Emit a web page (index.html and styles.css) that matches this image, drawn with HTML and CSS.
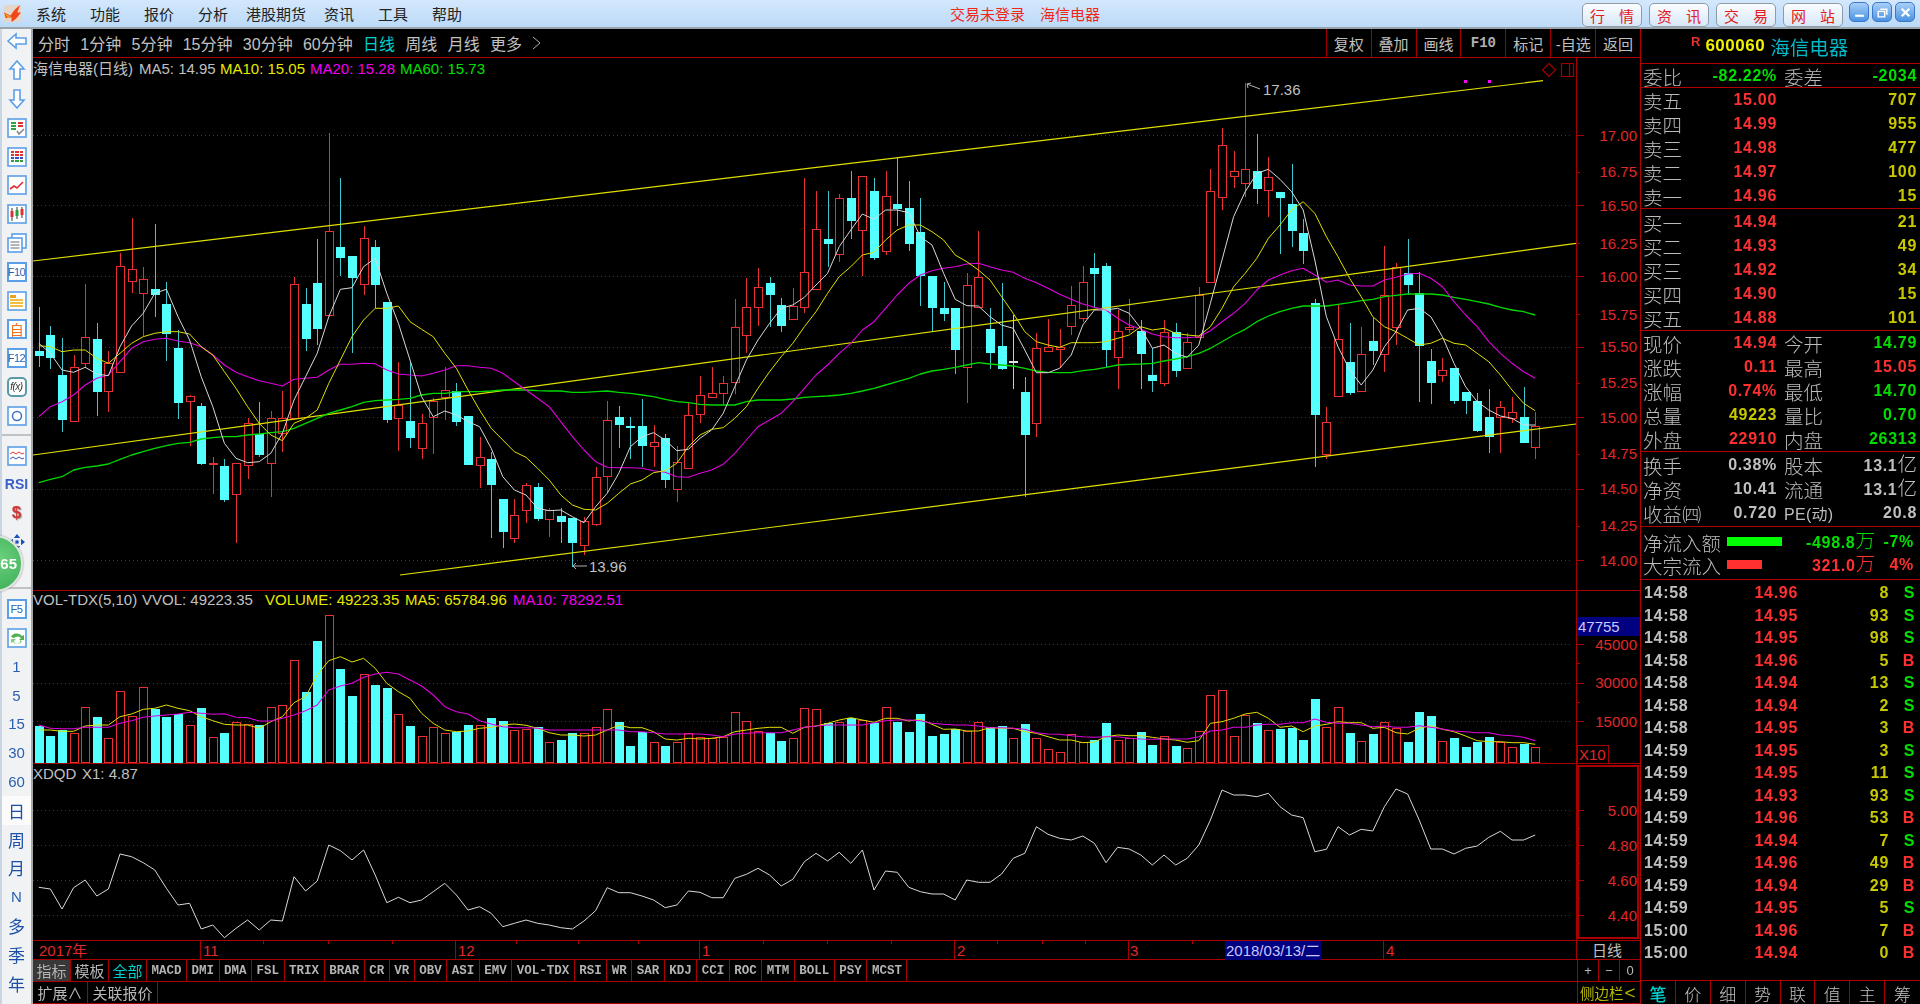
FILE: index.html
```html
<!DOCTYPE html>
<html lang="zh-CN">
<head>
<meta charset="utf-8">
<title>海信电器 600060</title>
<link rel="stylesheet" href="styles.css">
</head>
<body>
<div class="app">
  <header class="titlebar">
    <svg class="logo" viewBox="0 0 20 20"><rect x="1" y="1" width="18" height="18" rx="3" fill="#e4d6ca"/><path d="M1 9 L8 12 C11 7 14 4 18 1 L15 9 L19 9 C16 13 13 17 9 19 L9 14 L3 15 Z" fill="#f04818"/><path d="M2 10 L8 13 L5 15 Z" fill="#f8a020"/></svg>
    <nav class="menu"><span>系统</span><span>功能</span><span>报价</span><span>分析</span><span class="nar">港股期货</span><span>资讯</span><span>工具</span><span>帮助</span></nav>
    <div class="status"><span>交易未登录</span><span>海信电器</span></div>
    <div class="links"><a class="link"><i>行</i><i>情</i></a><a class="link"><i>资</i><i>讯</i></a><a class="link"><i>交</i><i>易</i></a><a class="link"><i>网</i><i>站</i></a></div>
    <div class="winbtns">
      <b class="winbtn"><svg viewBox="0 0 12 12"><rect x="2" y="8" width="8" height="2" fill="#fff"/></svg></b>
      <b class="winbtn"><svg viewBox="0 0 12 12"><path d="M4 3h6v5M2 5h6v5H2z" fill="none" stroke="#fff" stroke-width="1.3"/></svg></b>
      <b class="winbtn"><svg viewBox="0 0 12 12"><path d="M2.5 2.5l7 7M9.500 2.500l-7 7" stroke="#fff" stroke-width="2"/></svg></b>
    </div>
  </header>
  <div class="main">
    <aside class="side">
      <div class="cell first"><svg class="ic" viewBox="0 0 20 20"><path class="arr" d="M1 10 L9 3 V7 H19 V13 H9 V17 Z"/></svg></div>
      <div class="cell"><svg class="ic" viewBox="0 0 20 20"><path class="arr" d="M10 1 L17 9 H13 V19 H7 V9 H3 Z"/></svg></div>
      <div class="cell"><svg class="ic" viewBox="0 0 20 20"><path class="arr" d="M10 19 L17 11 H13 V1 H7 V11 H3 Z"/></svg></div>
      <div class="cell"><svg class="ic" viewBox="0 0 20 20"><rect class="box" x="1" y="1" width="18" height="18"/><path d="M4 5h5M4 8h5M4 11h5" stroke="#30a040" stroke-width="2"/><path d="M11 5h5M11 8h5" stroke="#e03030" stroke-width="2"/><path d="M10 13l2 3 5-5" fill="none" stroke="#888" stroke-width="1.600"/></svg></div>
      <div class="cell"><svg class="ic" viewBox="0 0 20 20"><rect class="box" x="1" y="1" width="18" height="18"/><path d="M4 5h12M4 8h12" stroke="#e03030" stroke-width="2"/><path d="M4 11h12" stroke="#3050c0" stroke-width="2"/><path d="M4 14h12" stroke="#30a040" stroke-width="2"/><path d="M7.500 4v12M12.500 4v12" stroke="#fff"/></svg></div>
      <div class="cell"><svg class="ic" viewBox="0 0 20 20"><rect class="box" x="1" y="1" width="18" height="18"/><path d="M3 14l4-3 3 2 6-6" fill="none" stroke="#e03030" stroke-width="1.600"/></svg></div>
      <div class="cell"><svg class="ic" viewBox="0 0 20 20"><rect class="box" x="1" y="1" width="18" height="18"/><path d="M5 4v13M10 3v12M15 3v11" stroke="#333"/><rect x="3.500" y="7" width="3" height="6" fill="#e03030"/><rect x="8.500" y="6" width="3" height="6" fill="#20a040"/><rect x="13.500" y="5" width="3" height="6" fill="#e03030"/></svg></div>
      <div class="cell"><svg class="ic" viewBox="0 0 20 20"><rect class="box" x="5" y="1" width="14" height="14"/><rect class="box" x="1" y="5" width="14" height="14"/><path d="M3.500 9h9M3.500 12h9M3.500 15h9" stroke="#667"/></svg></div>
      <div class="cell"><span class="fbox">F10</span></div>
      <div class="cell"><svg class="ic" viewBox="0 0 20 20"><rect class="box" x="1" y="1" width="18" height="18"/><rect x="3" y="4" width="6" height="3" fill="#e8a020"/><path d="M3 9h13M3 12h13M3 15h13" stroke="#f0c040" stroke-width="2"/></svg></div>
      <div class="cell"><span class="fbox orange">自</span></div>
      <div class="cell"><span class="fbox">F12</span></div>
      <div class="cell"><span class="fbox round">f(x)</span></div>
      <div class="cell"><svg class="ic" viewBox="0 0 20 20"><rect class="box" x="1" y="1" width="18" height="18"/><circle cx="10" cy="10" r="4.500" fill="none" stroke="#3c70c8" stroke-width="1.500"/></svg></div>
      <div class="sep top"></div>
      <div class="cell"><svg class="ic" viewBox="0 0 20 20"><rect class="box" x="1" y="1" width="18" height="18"/><path d="M3 8l3-2 3 2 3-2 3 2 2-1" fill="none" stroke="#e03030"/><path d="M3 13l3-2 3 2 3-2 3 2 2-1" fill="none" stroke="#3050c0"/></svg></div>
      <div class="cell"><span class="rsi">RSI</span></div>
      <div class="cell"><span class="dollar">$</span></div>
      <div class="cell"><svg class="ic wide" viewBox="0 0 20 20"><path d="M10 0l4 5h-8zM10 20l-4-5h8zM0 10l5-4v8zM20 10l-5 4v-8z" fill="#1c50c0"/><rect x="8" y="8" width="4" height="4" fill="#1c50c0"/></svg></div>
      <div class="sep mid"></div>
      <div class="cell"><span class="fbox">F5</span></div>
      <div class="cell"><svg class="ic" viewBox="0 0 20 20"><rect class="box" x="1" y="1" width="18" height="18"/><path d="M4 9a6 5 0 0 1 11-1l2-1v5h-5l2-2a4 3 0 0 0-7 0z" fill="#50b050"/><path d="M15 13a5 4 0 0 1-9 1l-2 1v-4h5l-2 2a3 3 0 0 0 6-1z" fill="#80d080"/></svg></div>
      <div class="cell nm">1</div><div class="cell nm">5</div><div class="cell nm">15</div><div class="cell nm">30</div><div class="cell nm">60</div>
      <div class="sep low"></div>
      <div class="cell nm cj active">日</div><div class="cell nm cj">周</div><div class="cell nm cj">月</div><div class="cell nm">N</div><div class="cell nm cj">多</div><div class="cell nm cj">季</div><div class="cell nm cj">年</div>
    </aside>
    <div class="bubble">65</div>
    <section class="center">
      <div class="toolbar">
        <div class="periods"><span>分时</span><span>1分钟</span><span>5分钟</span><span>15分钟</span><span>30分钟</span><span>60分钟</span><span class="on">日线</span><span>周线</span><span>月线</span><span>更多</span><svg class="chev" viewBox="0 0 9 14"><path d="M1 1l7 6-7 6" fill="none" stroke="#b0b0b0"/></svg></div>
        <div class="tools"><span>复权</span><span>叠加</span><span>画线</span><span class="f10">F10</span><span>标记</span><span>-自选</span><span>返回</span></div>
      </div>
      <svg class="chart" width="1607" height="902" viewBox="33 58 1607 902">
        <g id="grid"></g>
        <g id="plot"></g>
        <path class="channel" d="M33 261 L1543 80.700 M33 455 L1576 243.300 M400 575 L1576 424"/>
        <g id="lines"></g>
        <rect class="dot" x="1464" y="80" width="3" height="3"/><rect class="dot" x="1488" y="80" width="3" height="3"/>
        <path class="mark" d="M1549 63.500 L1555.500 70 L1549 76.500 L1542.500 70 Z M1561.500 63.500 H1573.500 V76.500 H1561.500 Z M1569.500 63.500 V76.500"/>
        <path class="pin" d="M1247 84 L1260 89 M1247 84 l4 -1 M1247 84 l1 4 M573 566 H587 M573 566 l3 -3 M573 566 l3 3"/>
        <text class="t gray" x="1263" y="95">17.36</text>
        <text class="t gray" x="589" y="572">13.96</text>

        <text class="t gray" x="33" y="74">海信电器(日线)</text>
        <text class="t gray" x="139" y="74">MA5: 14.95</text>
        <text class="t yel" x="220" y="74">MA10: 15.05</text>
        <text class="t mag" x="310" y="74">MA20: 15.28</text>
        <text class="t grn" x="400" y="74">MA60: 15.73</text>

        <text class="t gray" x="33" y="605">VOL-TDX(5,10)</text>
        <text class="t gray" x="142" y="605">VVOL: 49223.35</text>
        <text class="t yel" x="265" y="605">VOLUME: 49223.35</text>
        <text class="t yel" x="405" y="605">MA5: 65784.96</text>
        <text class="t mag" x="513" y="605">MA10: 78292.51</text>
        <text class="t gray" x="33" y="779">XDQD</text>
        <text class="t gray" x="82" y="779">X1: 4.87</text>

        <g class="axis">
          <text x="1637" y="141">17.00</text><text x="1637" y="177">16.75</text><text x="1637" y="211">16.50</text><text x="1637" y="249">16.25</text><text x="1637" y="282">16.00</text><text x="1637" y="320">15.75</text><text x="1637" y="352">15.50</text><text x="1637" y="388">15.25</text><text x="1637" y="423">15.00</text><text x="1637" y="459">14.75</text><text x="1637" y="494">14.50</text><text x="1637" y="531">14.25</text><text x="1637" y="566">14.00</text>
          <text x="1637" y="650">45000</text><text x="1637" y="688">30000</text><text x="1637" y="727">15000</text>
          <text x="1637" y="816">5.00</text><text x="1637" y="851">4.80</text><text x="1637" y="886">4.60</text><text x="1637" y="921">4.40</text>
        </g>
        <rect class="blue" x="1577" y="617" width="63" height="19"/>
        <text class="t pale" x="1578" y="632">47755</text>
        <rect class="xbox" x="1577.500" y="745.500" width="31" height="18"/>
        <text class="t red" x="1579" y="760">X10</text>

        <text class="t red" x="39" y="956">2017年</text>
        <text class="t red" x="203" y="956">11</text>
        <text class="t red" x="458" y="956">12</text>
        <text class="t red" x="702" y="956">1</text>
        <text class="t red" x="957" y="956">2</text>
        <text class="t red" x="1130" y="956">3</text>
        <rect class="blue" x="1225" y="941" width="96" height="19"/>
        <text class="t pale" x="1226" y="956">2018/03/13/二</text>
        <text class="t red" x="1386" y="956">4</text>
        <text class="t gray mid" x="1607" y="956">日线</text>
      </svg>
      <div class="tabs">
        <div class="tabset"><span class="cn sel">指标</span><span class="cn">模板</span><span class="cn cy">全部</span><span>MACD</span><span>DMI</span><span>DMA</span><span>FSL</span><span>TRIX</span><span>BRAR</span><span>CR</span><span>VR</span><span>OBV</span><span>ASI</span><span>EMV</span><span>VOL-TDX</span><span>RSI</span><span>WR</span><span>SAR</span><span>KDJ</span><span>CCI</span><span>ROC</span><span>MTM</span><span>BOLL</span><span>PSY</span><span>MCST</span></div>
        <div class="zoombtns"><span>+</span><span>−</span><span>0</span></div>
      </div>
      <div class="tabs low">
        <div class="extra"><span>扩展∧</span><span>关联报价</span></div>
        <div class="sidebar-toggle">侧边栏<span class="lt">&lt;</span></div>
      </div>
    </section>
    <aside class="quote">
      <div class="q-head"><sup>R</sup><b>600060</b><em>海信电器</em></div>
      <div class="q-sec q-ratio r4"><span class="l">委比</span><span class="n grn">-82.22%</span><span class="l l2">委差</span><span class="n grn">-2034</span></div>
      <div class="q-sec">
        <div class="r3"><span class="l">卖五</span><span class="n red">15.00</span><span class="n yel">707</span></div>
        <div class="r3"><span class="l">卖四</span><span class="n red">14.99</span><span class="n yel">955</span></div>
        <div class="r3"><span class="l">卖三</span><span class="n red">14.98</span><span class="n yel">477</span></div>
        <div class="r3"><span class="l">卖二</span><span class="n red">14.97</span><span class="n yel">100</span></div>
        <div class="r3"><span class="l">卖一</span><span class="n red">14.96</span><span class="n yel">15</span></div>
      </div>
      <div class="q-sec q-buy">
        <div class="r3"><span class="l">买一</span><span class="n red">14.94</span><span class="n yel">21</span></div>
        <div class="r3"><span class="l">买二</span><span class="n red">14.93</span><span class="n yel">49</span></div>
        <div class="r3"><span class="l">买三</span><span class="n red">14.92</span><span class="n yel">34</span></div>
        <div class="r3"><span class="l">买四</span><span class="n red">14.90</span><span class="n yel">15</span></div>
        <div class="r3"><span class="l">买五</span><span class="n red">14.88</span><span class="n yel">101</span></div>
      </div>
      <div class="q-sec">
        <div class="r4"><span class="l">现价</span><span class="n red">14.94</span><span class="l l2">今开</span><span class="n grn">14.79</span></div>
        <div class="r4"><span class="l">涨跌</span><span class="n red">0.11</span><span class="l l2">最高</span><span class="n red">15.05</span></div>
        <div class="r4"><span class="l">涨幅</span><span class="n red">0.74%</span><span class="l l2">最低</span><span class="n grn">14.70</span></div>
        <div class="r4"><span class="l">总量</span><span class="n yel">49223</span><span class="l l2">量比</span><span class="n grn">0.70</span></div>
        <div class="r4"><span class="l">外盘</span><span class="n red">22910</span><span class="l l2">内盘</span><span class="n grn">26313</span></div>
      </div>
      <div class="q-sec q-info">
        <div class="r4"><span class="l">换手</span><span class="n gry">0.38%</span><span class="l l2">股本</span><span class="n gry">13.1<u>亿</u></span></div>
        <div class="r4"><span class="l">净资</span><span class="n gry">10.41</span><span class="l l2">流通</span><span class="n gry">13.1<u>亿</u></span></div>
        <div class="r4"><span class="l wide-l">收益㈣</span><span class="n gry">0.720</span><span class="pe l2">PE(动)</span><span class="n gry">20.8</span></div>
      </div>
      <div class="q-sec q-flow">
        <div class="fl"><span class="l">净流入额</span><i class="bar g"></i><span class="n grn fv">-498.8<u>万</u></span><span class="n grn fp">-7%</span></div>
        <div class="fl"><span class="l">大宗流入</span><i class="bar r"></i><span class="n red fv">321.0<u>万</u></span><span class="n red fp">4%</span></div>
      </div>
      <div class="q-ticks">
        <div class="tk"><span class="n gry">14:58</span><span class="n red">14.96</span><span class="n yel">8</span><span class="n grn">S</span></div>
        <div class="tk"><span class="n gry">14:58</span><span class="n red">14.95</span><span class="n yel">93</span><span class="n grn">S</span></div>
        <div class="tk"><span class="n gry">14:58</span><span class="n red">14.95</span><span class="n yel">98</span><span class="n grn">S</span></div>
        <div class="tk"><span class="n gry">14:58</span><span class="n red">14.96</span><span class="n yel">5</span><span class="n red">B</span></div>
        <div class="tk"><span class="n gry">14:58</span><span class="n red">14.94</span><span class="n yel">13</span><span class="n grn">S</span></div>
        <div class="tk"><span class="n gry">14:58</span><span class="n red">14.94</span><span class="n yel">2</span><span class="n grn">S</span></div>
        <div class="tk"><span class="n gry">14:58</span><span class="n red">14.95</span><span class="n yel">3</span><span class="n red">B</span></div>
        <div class="tk"><span class="n gry">14:59</span><span class="n red">14.95</span><span class="n yel">3</span><span class="n grn">S</span></div>
        <div class="tk"><span class="n gry">14:59</span><span class="n red">14.95</span><span class="n yel">11</span><span class="n grn">S</span></div>
        <div class="tk"><span class="n gry">14:59</span><span class="n red">14.93</span><span class="n yel">93</span><span class="n grn">S</span></div>
        <div class="tk"><span class="n gry">14:59</span><span class="n red">14.96</span><span class="n yel">53</span><span class="n red">B</span></div>
        <div class="tk"><span class="n gry">14:59</span><span class="n red">14.94</span><span class="n yel">7</span><span class="n grn">S</span></div>
        <div class="tk"><span class="n gry">14:59</span><span class="n red">14.96</span><span class="n yel">49</span><span class="n red">B</span></div>
        <div class="tk"><span class="n gry">14:59</span><span class="n red">14.94</span><span class="n yel">29</span><span class="n red">B</span></div>
        <div class="tk"><span class="n gry">14:59</span><span class="n red">14.95</span><span class="n yel">5</span><span class="n grn">S</span></div>
        <div class="tk"><span class="n gry">15:00</span><span class="n red">14.96</span><span class="n yel">7</span><span class="n red">B</span></div>
        <div class="tk"><span class="n gry">15:00</span><span class="n red">14.94</span><span class="n yel">0</span><span class="n red">B</span></div>
      </div>
      <div class="q-tabs"><span class="on">笔</span><span>价</span><span>细</span><span>势</span><span>联</span><span>值</span><span>主</span><span>筹</span></div>
    </aside>
  </div>
</div>
<script src="chart.js"></script>
</body>
</html>
```
FILE: styles.css
```css
* { box-sizing: border-box; }
html, body { margin: 0; padding: 0; background: #000; }
body { width: 1920px; height: 1004px; overflow: hidden; font-family: "Liberation Sans", "Noto Sans CJK SC", sans-serif; }
.app { width: 1920px; height: 1004px; display: flex; flex-direction: column; position: relative; filter: blur(.35px); }

/* title bar */
.titlebar { height: 29px; flex: none; display: flex; align-items: center; position: relative; background: linear-gradient(#d3e8fc, #bcdaf7); border-bottom: 2px solid #9aa4ad; padding-left: 3px; }
.logo { width: 19px; height: 19px; flex: none; }
.menu { display: flex; gap: 24px; margin-left: 14px; font-size: 15px; color: #222; font-family: "Noto Sans CJK SC", sans-serif; }
.menu .nar { margin: 0 -6px; }
.status { display: flex; gap: 15px; margin-left: 490px; font-size: 15px; color: #f02818; font-family: "Noto Sans CJK SC", sans-serif; position: absolute; left: 460px; }
.links { display: flex; gap: 7px; position: absolute; right: 77px; top: 3px; }
.link { width: 60px; height: 24px; display: flex; justify-content: space-between; align-items: center; padding: 0 7px; border: 1px solid #8f9ca8; border-radius: 5px; background: linear-gradient(#fbfdff, #d7e7f7); color: #e02020; font-size: 15px; font-family: "Noto Sans CJK SC", sans-serif; }
.link i { font-style: normal; }
.winbtns { display: flex; gap: 3px; position: absolute; right: 5px; top: 2px; }
.winbtn { width: 20px; height: 20px; border-radius: 5px; border: 1px solid #3a78c8; background: linear-gradient(#a8cff7, #4c92e2); display: flex; align-items: center; justify-content: center; }
.winbtn svg { width: 13px; height: 13px; }

.main { flex: 1; display: flex; min-height: 0; position: relative; }

/* left tool column */
.side { width: 33px; flex: none; background: #f1f2f4; border-left: 2px solid #c9d5e2; border-right: 2px solid #a4a8ac; display: flex; flex-direction: column; align-items: center; overflow: hidden; }
.cell { width: 100%; height: 28.800px; flex: none; display: flex; align-items: center; justify-content: center; }
.cell.first { margin-top: -2px; }
.ic { width: 20px; height: 20px; }
.ic.wide { width: 16px; height: 16px; }
.arr { fill: #fff; stroke: #5b9fe8; stroke-width: 1.6; }
.box { fill: #fff; stroke: #5b9fe8; stroke-width: 1.6; }
.fbox { width: 20px; height: 20px; background: #fff; border: 2px solid #5b9fe8; color: #2a62b8; font-size: 11px; display: flex; align-items: center; justify-content: center; letter-spacing: -0.5px; }
.fbox.orange { color: #f07020; font-size: 14px; font-family: "Noto Sans CJK SC", sans-serif; }
.fbox.round { border-radius: 5px; border-color: #5a9aa8; font-style: italic; font-size: 10px; color: #333; }
.rsi { color: #3a5fc8; font-weight: bold; font-size: 14px; }
.dollar { color: #d03838; font-weight: bold; font-size: 17px; text-shadow: 1px 1px 1px #999; }
.nm { color: #2a5fb0; font-size: 15px; }
.nm.cj { font-family: "Noto Sans CJK SC", sans-serif; font-size: 17px; color: #1c50a8; }
.nm.active { background: #fbfbfb; }
.sep { width: 100%; height: 2px; background: #c0c2c4; flex: none; }
.sep.top { margin: 4px 0 5px; }
.sep.mid { margin: 31px 0 5px; }
.sep.low { margin: 0 0 -2px; }
.bubble { position: absolute; left: -34px; top: 506px; width: 57px; height: 57px; border-radius: 50%; background: radial-gradient(circle at 60% 40%, #6ad07c, #32a650); border: 2px solid #dfe4df; box-shadow: 0 0 2px #777; color: #fff; font-size: 15px; font-weight: bold; display: flex; align-items: center; justify-content: flex-end; padding-right: 4px; }

/* centre column */
.center { flex: 1; min-width: 0; display: flex; flex-direction: column; background: #000; }
.toolbar { height: 29px; flex: none; display: flex; justify-content: space-between; border-bottom: 1px solid #b00000; color: #c0c0c0; font-size: 16px; font-family: "Liberation Sans", "Noto Sans CJK SC", sans-serif; }
.periods { display: flex; gap: 10.300px; align-items: center; padding-left: 5px; }
.periods .on { color: #00d0d0; }
.chev { width: 9px; height: 14px; }
.tools { display: flex; align-items: stretch; font-size: 15px; }
.tools span { width: 44.900px; display: flex; align-items: center; justify-content: center; border-left: 1px solid #a00000; }
.tools .f10 { font-family: "Liberation Mono", monospace; font-weight: bold; font-size: 14px; color: #b0b0b0; }
.chart { display: block; flex: none; }

.t { font-size: 15px; }
.t, .axis text { font-family: "Liberation Sans", "Noto Sans CJK SC", sans-serif; }
.gray { fill: #c0c0c0; }
.yel { fill: #e8e800; }
.mag { fill: #f000f0; }
.grn { fill: #00e000; }
.red { fill: #e02828; }
.pale { fill: #c8c8ff; }
.mid { text-anchor: middle; }
.axis text { font-size: 15px; fill: #e02828; text-anchor: end; }
.blue { fill: #000080; }
.xbox { fill: none; stroke: #a00000; }
.channel { fill: none; stroke: #e0e000; stroke-width: 1.200; }
.dot { fill: #ff00ff; }
.mark { fill: none; stroke: #a00000; stroke-width: 1.200; }
.pin { fill: none; stroke: #b0b0b0; }
.frame { fill: none; stroke: #a80000; shape-rendering: crispEdges; }
.frame2 { fill: none; stroke: #a80000; stroke-width: 2; shape-rendering: crispEdges; }
.dots { fill: none; stroke: #c00000; stroke-dasharray: 1 3; shape-rendering: crispEdges; }
.wk-r { stroke: #e83030; shape-rendering: crispEdges; }
.wk-c { stroke: #40c8d0; shape-rendering: crispEdges; }
.wk-w { stroke: #c8c8c8; shape-rendering: crispEdges; }
.bd-r { fill: #000; stroke: #e83030; shape-rendering: crispEdges; }
.bd-c { fill: #54ffff; shape-rendering: crispEdges; }
.bd-w { fill: #e0e0e0; shape-rendering: crispEdges; }
.ma { fill: none; stroke-width: 1; stroke-linejoin: round; }
.ma-w { stroke: #d8d8d8; }
.ma-y { stroke: #e0e000; }
.ma-m { stroke: #e000e0; stroke-width: 1.100; }
.ma-g { stroke: #00d800; stroke-width: 1.300; }

.tabs { height: 22px; flex: none; display: flex; justify-content: space-between; border-bottom: 1px solid #a80000; }
.tabs.low { height: 22px; }
.tabset { display: flex; }
.tabset span { height: 21px; padding: 0 4.500px; display: flex; align-items: center; border-right: 1px solid #a80000; color: #b4b4b4; font: bold 12.500px "Liberation Mono", monospace; }
.tabset .cn { font: 15px "Noto Sans CJK SC", sans-serif; padding: 0 3.500px; }
.tabset .sel { background: #383838; }
.tabset .cy { color: #00d0d0; }
.zoombtns { width: 63px; display: flex; border-left: 1px solid #a80000; }
.zoombtns span { flex: 1; display: flex; align-items: center; justify-content: center; color: #b8b8b8; font-size: 13px; border-right: 1px solid #a80000; }
.zoombtns span:last-child { border-right: 0; }
.extra { display: flex; }
.extra span { padding: 0 0 0 4.500px; width: 55px; display: flex; align-items: center; color: #b8b8b8; font: 15px "Noto Sans CJK SC", sans-serif; border-right: 1px solid #a80000; white-space: nowrap; }
.extra span:last-child { width: 70px; }
.sidebar-toggle { width: 63px; border-left: 1px solid #a80000; color: #b8b800; font: 14.500px "Noto Sans CJK SC", sans-serif; display: flex; align-items: center; padding-left: 2px; white-space: nowrap; }
.lt { font: 19px "Liberation Sans", sans-serif; margin-left: 1px; }

/* quote column */
.quote { width: 280px; flex: none; border-left: 1px solid #b00000; display: flex; flex-direction: column; background: #000; padding-left: 2px; padding-right: 3px; }
.q-head { height: 35px; margin: 0 -3px 0 -2px; display: flex; align-items: center; padding-left: 50px; border-bottom: 1px solid #b00000; flex: none; }
.q-head sup { color: #e83030; font-size: 13px; font-weight: bold; margin: -9px 5px 0 0; }
.q-head b { color: #f0f000; font-size: 17px; letter-spacing: .5px; }
.q-head em { color: #00b8c8; font: 19.500px "Noto Sans CJK SC", sans-serif; margin-left: 5px; }
.q-sec { border-bottom: 1px solid #b00000; margin: 0 -3px 0 -2px; padding: 0 3px 0 2px; flex: none; }
.q-ratio { height: 25px; }
.q-buy { padding-top: 1px; }
.r3, .r4 { display: grid; align-items: center; height: 24px; white-space: nowrap; }
.r3 { grid-template-columns: 40px 94px 1fr; }
.r4 { grid-template-columns: 40px 94px 47px 1fr; }
.q-info { padding-top: 1px; padding-bottom: 1px; }
.l { color: #bcbcbc; height: 24px; font: 300 19.500px/29px "Liberation Sans", "Noto Sans CJK SC", sans-serif; }
.l2 { padding-left: 7px; }
.wide-l { width: 70px; }
.pe { color: #bcbcbc; font-size: 16px; letter-spacing: .3px; }
.n { font-size: 16px; font-weight: bold; letter-spacing: .7px; text-align: right; display: block; }
.n u { text-decoration: none; font: 300 19.500px/1 "Liberation Sans", "Noto Sans CJK SC", sans-serif; letter-spacing: 0; }
.n.red { color: #ff3030; }
.n.yel { color: #c8c800; }
.n.grn { color: #00e000; }
.n.gry { color: #c0c0c0; }
.q-flow { height: 53px; padding-top: 3px; }
.fl { height: 23px; display: flex; align-items: center; position: relative; }
.fl .l { width: 84px; flex: none; white-space: nowrap; height: 23px; line-height: 28px; }
.bar { height: 9px; flex: none; display: block; }
.bar.g { width: 55px; background: #00ff00; }
.bar.r { width: 35px; background: #ff3030; }
.fv { position: absolute; right: 42px; }
.fp { position: absolute; right: 3px; }
.q-ticks { height: 400px; flex: none; margin-left: 1px; padding-top: 2px; }
.tk { height: 22.500px; display: grid; grid-template-columns: 60px 94px 91px 26px; align-items: center; }
.tk .n:first-child { text-align: left; }
.q-tabs { flex: 1; display: flex; margin: 0 -3px 0 -2px; border-top: 1px solid #b00000; }
.q-tabs span { width: 35px; display: flex; align-items: center; justify-content: center; color: #c0c0c0; font: 300 17px "Noto Sans CJK SC", sans-serif; border-right: 1px solid #a80000; }
.q-tabs span:last-child { border-right: 0; }
.q-tabs .on { color: #00d0d0; font-weight: 500; }
```
FILE: chart.js
```js
var C=[
['c',740,872,886,920],['c',797,824,890,928],['c',835,944,1078,1115],['r',885,922,1082,1082],['r',673,832,908,925],['c',790,838,992,1067],['r',873,908,994,1055],['r',580,618,935,940],['r',475,626,664,698],['r',622,656,698,828],
['c',492,688,702,770],['c',667,733,820,902],['c',810,865,1025,1078],['r',1005,1008,1024,1157],['c',1030,1037,1210,1215],['r',1190,1208,1212,1303],['c',1198,1217,1318,1325],['r',1210,1210,1302,1448],['r',1075,1090,1215,1258],['c',1025,1122,1183,1190],
['r',1052,1073,1208,1310],['r',992,1075,1118,1175],['r',650,673,1075,1075],['c',685,733,833,872],['c',538,670,803,855],['r',220,513,766,770],['c',355,561,590,648],['c',587,587,650,878],['r',497,535,672,706],['c',541,561,672,745],
['c',727,727,1078,1088],['r',905,1035,1073,1172],['c',905,1083,1130,1165],['r',1063,1088,1163,1198],['r',1015,1022,1072,1183],['r',922,990,1012,1080],['c',970,994,1082,1097],['c',1068,1068,1213,1215],['r',1130,1192,1215,1285],['c',1177,1198,1272,1435],
['c',1318,1318,1412,1463],['r',1318,1365,1433,1450],['r',1268,1275,1350,1388],['c',1270,1282,1373,1382],['r',1345,1350,1378,1430],['c',1345,1368,1382,1450],['c',1375,1375,1445,1520],['r',1372,1382,1455,1485],['r',1222,1250,1392,1398],['r',1022,1080,1248,1298],
['c',1038,1072,1093,1165],['c',1072,1099,1102,1198],['c',1018,1098,1155,1222],['r',1095,1145,1158,1220],['c',1122,1135,1257,1285],['r',1158,1207,1287,1325],['r',1030,1065,1223,1225],['r',948,1005,1062,1088],['r',920,998,1010,1010],['r',948,970,998,1035],
['r',718,802,967,1002],['r',655,742,826,880],['r',625,682,740,797],['c',652,670,703,800],['c',715,735,796,815],['r',685,738,777,778],['r',355,637,740,758],['r',392,506,687,690],['c',392,538,550,620],['r',403,415,582,605],
['c',332,415,481,538],['r',348,348,511,647],['c',355,392,590,600],['r',332,408,574,585],['c',292,433,444,497],['c',362,445,549,572],['c',415,516,646,737],['c',648,648,740,815],['c',665,745,759,783],['c',745,745,867,942],
['r',640,675,922,1028],['r',513,652,742,745],['c',745,808,875,928],['c',670,857,924,930],['w',765,902,905,988],['c',950,996,1123,1312],['r',820,865,1088,1130],['r',778,862,872,875],['r',808,862,866,925],['r',678,735,798,825],
['r',618,667,773,785],['c',580,625,638,745],['c',610,618,867,922],['r',750,813,890,988],['r',718,802,806,820],['c',780,812,878,988],['c',865,944,961,995],['r',780,817,968,978],['c',790,815,931,950],['r',820,847,923,925],
['r',682,705,830,835],['r',328,393,667,668],['r',205,255,412,450],['r',272,333,347,383],['r',70,328,368,410],['c',222,332,384,432],['r',292,352,390,470],['c',395,397,410,583],['c',313,433,511,560],['c',478,520,571,612],
['c',718,730,1062,1220],['r',1040,1085,1183,1197],['r',735,838,1008,1010],['c',790,907,995,1005],['r',800,881,993,995],['c',775,843,871,915],['r',557,705,881,935],['r',610,620,800,855],['c',538,640,672,706],['c',635,700,855,1025],
['c',868,903,965,1032],['r',895,930,946,965],['c',925,925,1021,1032],['c',995,997,1020,1062],['c',1000,1023,1110,1115],['c',988,1072,1128,1178],['r',1022,1040,1072,1180],['r',1012,1055,1075,1088],['c',982,1072,1145,1148],['r',1055,1098,1162,1197]
];
var VB=[407,437,420,428,352,382,445,304,378,292,358,382,372,405,355,442,430,397,402,404,352,344,210,307,152,74,238,318,251,284,295,371,407,438,412,428,425,404,404,385,392,420,416,412,457,449,430,430,412,356,397,468,425,457,
467,455,428,441,445,442,367,393,423,428,453,445,355,358,400,395,384,390,400,352,395,426,373,437,433,418,423,397,410,407,445,403,445,476,487,432,455,450,400,450,445,427,464,438,467,475,424,314,299,438,376,400,420,418,413,449,328,412,352,430,453,433,397,415,456,367,377,453,445,471,456,441,455,472,463,472];
var MA5=[850,880,930,937,922,942,947,860,798,760,700,688,770,840,950,1040,1150,1195,1208,1205,1180,1120,1020,950,880,770,688,683,620,595,700,790,900,1010,1070,1053,1065,1085,1100,1165,1250,1290,1305,1345,1352,1350,1370,1388,1340,1300,1240,1160,1130,1118,
1140,1172,1168,1135,1110,1060,980,900,840,790,745,735,712,675,640,560,510,462,478,450,450,458,530,555,640,718,737,738,770,795,805,870,938,938,925,885,795,750,750,745,760,805,865,855,880,892,
855,730,600,470,395,340,328,358,395,450,600,770,860,930,975,930,860,815,750,745,770,830,910,980,1025,1050,1068,1075,1095,1095];
var MA10=[857,860,875,870,870,895,910,880,850,830,820,815,815,822,860,885,935,985,1040,1090,1125,1142,1090,1075,1050,970,900,830,780,745,745,738,785,808,830,880,925,990,1050,1105,1140,1175,1192,1225,1260,1305,1335,1348,1350,1330,1300,1272,1260,1238,
1232,1210,1160,1125,1108,1103,1075,1040,985,935,890,850,800,755,700,650,620,585,577,540,510,495,495,515,540,585,605,630,660,710,760,815,845,855,862,848,848,848,845,835,825,800,810,805,820,825,
828,800,745,680,640,595,535,495,450,425,460,530,590,655,710,770,800,815,835,855,850,835,850,855,880,905,945,990,1030,1052];
var MA20=[1070,1040,1025,1005,975,955,945,905,865,845,838,835,843,848,860,885,915,937,950,962,970,978,958,955,952,930,913,913,910,911,930,942,945,948,940,930,917,917,922,925,940,965,990,1015,1040,1085,1130,1170,1205,1222,1223,1223,1225,1232,
1237,1250,1252,1240,1230,1213,1180,1140,1100,1080,1060,1025,985,945,915,880,850,810,785,745,705,670,645,632,625,620,612,610,620,630,637,655,668,685,703,718,732,742,750,775,795,808,822,830,833,833,
830,812,785,760,730,690,660,645,632,625,645,667,660,675,678,678,660,652,642,640,655,680,725,765,800,845,880,910,935,955];
var MA60=[1268,1258,1250,1230,1222,1218,1212,1198,1185,1175,1165,1157,1150,1147,1137,1133,1130,1130,1125,1122,1118,1115,1105,1090,1075,1060,1050,1040,1027,1022,1020,1018,1015,1005,1000,1000,995,995,995,993,990,990,990,992,993,993,997,997,995,993,997,1000,1005,1010,
1018,1025,1028,1033,1035,1035,1035,1025,1020,1020,1020,1017,1012,1010,1008,1005,1000,993,985,975,965,955,942,933,928,922,915,908,912,915,918,925,933,937,938,938,932,928,922,915,913,912,910,903,897,890,
880,865,845,825,808,785,768,755,745,738,738,738,733,728,722,718,710,706,702,702,702,705,712,718,725,732,742,750,755,765];
var VY=[420,420,424,424,408,405,405,380,372,358,355,345,355,362,380,392,403,405,405,415,395,380,338,320,255,212,200,216,205,235,280,305,325,370,400,420,425,423,415,412,405,402,406,415,428,435,435,438,435,420,406,413,413,425,
447,450,445,447,445,440,425,420,415,412,412,430,412,408,400,390,383,390,397,385,385,393,388,403,418,417,423,423,413,415,415,425,430,440,450,450,458,456,440,435,437,437,442,447,450,457,452,400,395,385,372,367,385,412,408,425,408,403,395,398,398,415,412,428,432,415,407,418,425,438,452,455,455,458,458,463];
var VM=[405,415,416,416,412,412,412,400,392,382,378,375,372,367,370,373,371,382,383,393,393,385,375,362,345,300,288,280,262,252,247,252,270,288,315,350,365,372,392,402,410,413,413,415,420,420,420,420,420,420,420,425,425,428,
432,432,432,432,435,440,432,430,428,428,428,420,412,408,405,405,405,405,398,392,390,390,392,400,403,405,405,408,413,413,415,418,428,432,433,437,440,442,440,440,445,447,448,447,447,447,440,423,420,412,412,405,403,403,398,398,387,397,400,400,405,410,408,412,412,407,412,417,423,425,428,428,435,437,442,452];
var XD=[892,897,957,893,870,918,897,792,800,818,840,895,945,940,1017,1005,1043,1015,990,1020,990,993,860,903,873,765,782,810,780,855,938,922,938,930,905,880,915,960,950,970,1010,1000,990,1000,1005,1013,1017,993,962,893,908,908,918,930,
953,945,903,907,923,923,865,853,835,855,888,868,815,790,813,787,820,780,900,843,847,892,905,912,912,930,870,877,877,852,805,790,710,733,745,750,738,760,818,772,777,795,825,795,825,805,765,690,600,615,615,620,610,650,675,683,785,778,710,735,718,723,650,597,612,690,777,777,792,775,768,742,724,750,750,735];

function px(i){return 38.8+11.6*i;}
function cx(i){return Math.round(px(i))+0.5;}
function Y(z){return 60+z/3;}
function V(z){return 590+z/3;}
function crisp(v){return Math.round(v)+0.5;}
function poly(cls,arr,f){
  var pts=arr.map(function(z,i){return px(i).toFixed(1)+','+f(z).toFixed(1);}).join(' ');
  return '<polyline class="ma '+cls+'" points="'+pts+'"/>';
}

/* frames, dotted grid and axis ticks */
var g='';
[135,205,276,347,417,489,560,644,683,721,810,845,880,915].forEach(function(y){
  g+='<path class="dots" d="M33 '+(y+.5)+' H1572"/>';
  g+='<path class="frame" d="M1577 '+(y+.5)+' H1584"/>';
});
[172,243,314,383,454,526,663,702,828,863,898].forEach(function(y){
  g+='<path class="frame" d="M1577 '+(y+.5)+' H1580"/>';
});
g+='<path class="frame" d="M1576.5 58 V960 M33 590.5 H1640 M33 763.5 H1640 M33 940.5 H1640 M33 959.5 H1640"/>';
g+='<rect class="frame2" x="1578" y="766" width="60" height="172"/>';
[200,455,699,954,1128,1383].forEach(function(x){g+='<path class="frame" d="M'+(x+.5)+' 941 V960"/>';});
[263,328,392,516,578,638,763,827,891,997,1042,1085,1192].forEach(function(x){g+='<path class="frame" d="M'+(x+.5)+' 941 V944"/>';});
document.getElementById('grid').innerHTML=g;

/* candles and volume bars */
var p='';
C.forEach(function(d,i){
  var x=cx(i),k=d[0];
  var hi=Math.round(Y(d[1])),top=crisp(Y(d[2])),bot=crisp(Y(d[3])),lo=Math.round(Y(d[4]));
  p+='<path class="wk-'+k+'" d="M'+x+' '+hi+' V'+lo+'"/>';
  if(k==='r'){p+='<rect class="bd-r" x="'+(x-4)+'" y="'+top+'" width="8" height="'+Math.max(bot-top,1)+'"/>';}
  else{p+='<rect class="bd-'+k+'" x="'+(x-4.5)+'" y="'+(top-.5)+'" width="9" height="'+Math.max(bot-top+1,2)+'"/>';}
  var vt=crisp(V(VB[i])),up=k==='r'||i===84;
  if(up){p+='<rect class="bd-r" x="'+(x-4)+'" y="'+vt+'" width="8" height="'+(762.5-vt)+'"/>';}
  else{p+='<rect class="bd-c" x="'+(x-4.5)+'" y="'+(vt-.5)+'" width="9" height="'+(763-vt)+'"/>';}
});
document.getElementById('plot').innerHTML=p;

/* indicator lines */
document.getElementById('lines').innerHTML=
  poly('ma-g',MA60,Y)+poly('ma-m',MA20,Y)+poly('ma-y',MA10,Y)+poly('ma-w',MA5,Y)+
  poly('ma-y',VY,V)+poly('ma-m',VM,V)+poly('ma-w',XD,V);
```
